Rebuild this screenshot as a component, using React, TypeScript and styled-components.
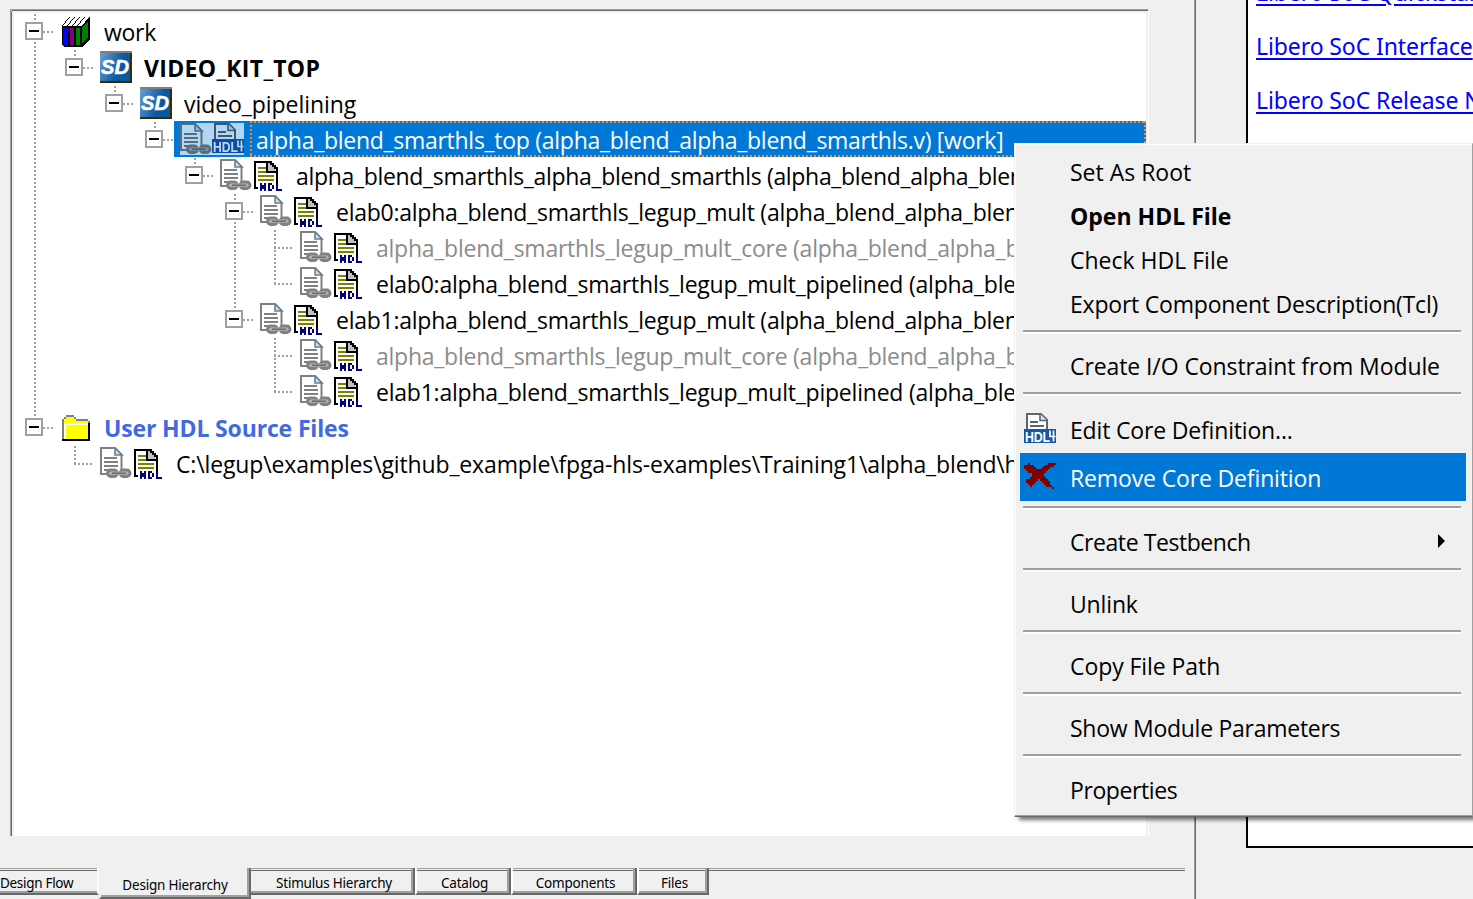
import React from 'react';
import styled, { createGlobalStyle, css } from 'styled-components';

const FACE = '#f0f0f0';
const SHADE = '#a0a0a0';
const DARK = '#696969';
const BLUE = '#0078d7';

const GlobalStyle = createGlobalStyle`
  *, *::before, *::after { box-sizing: border-box; }
  html, body { margin: 0; background: ${FACE}; overflow: hidden; }
  body { font-family: 'Open Sans', 'Noto Sans', sans-serif; color: #000; }
`;

const Screen = styled.div`
  position: relative;
  display: flex;
  width: 1473px;
  height: 899px;
  overflow: hidden;
  background: ${FACE};
`;

const LeftPane = styled.section`
  display: flex;
  flex-direction: column;
  flex: none;
  width: 1194px;
  padding-top: 9px;
`;

const Splitter = styled.div`
  flex: none;
  width: 2px;
  border-left: 1px solid ${SHADE};
  border-right: 1px solid ${DARK};
`;

const TreeFrame = styled.div`
  width: 1139px;
  height: 827px;
  margin-left: 10px;
  border-top: 1px solid ${SHADE};
  border-left: 1px solid ${SHADE};
  border-right: 1px solid #fff;
`;

const TreeView = styled.div`
  height: 825px;
  margin: 1px 0 0 1px;
  border: 2px solid ${FACE};
  border-bottom: 0;
  box-shadow: -1px 0 0 ${DARK}, 0 -1px 0 ${DARK};
  background: #fff;
  overflow: hidden;
`;

const Row = styled.div`
  display: flex;
  height: 36px;
  padding-left: 1px;
`;

const dotsDown = css`
  background-image: repeating-linear-gradient(to bottom, ${SHADE} 0 2px, transparent 2px 4px);
`;

const GuideCell = styled.div<{ $line: Guide }>`
  flex: none;
  display: flex;
  align-items: flex-start;
  width: 40px;
  height: 36px;
  background-repeat: no-repeat;
  background-position: 19px 1px;
  background-size: 2px ${(p) => (p.$line === 'full' ? 36 : 18)}px;
  ${(p) => p.$line !== 'none' && dotsDown}
`;

const Stub = styled.div<{ $leaf?: boolean }>`
  width: ${(p) => (p.$leaf ? 18 : 10)}px;
  height: 2px;
  margin: 18px 0 0 ${(p) => (p.$leaf ? 19 : 0)}px;
  background-image: repeating-linear-gradient(to right, ${SHADE} 0 2px, transparent 2px 4px);
`;

const ToggleBox = styled.div`
  display: flex;
  justify-content: center;
  width: 18px;
  height: 18px;
  margin: 9px 0 0 10px;
  padding-top: 6px;
  border: 2px solid ${SHADE};
  background: #fff;
`;

const Minus = styled.div`
  width: 10px;
  height: 2px;
  background: #000;
`;

const Content = styled.div<{ $selected?: boolean }>`
  display: flex;
  flex: 1;
  min-width: 0;
  margin-left: -1px;
  padding-left: 6px;
  background: ${(p) => (p.$selected ? BLUE : 'transparent')};
`;

const Icons = styled.div<{ $selected?: boolean }>`
  display: flex;
  flex: none;
  height: 32px;
  margin: 2px 6px 0 0;
  isolation: isolate;
  background: ${(p) => (p.$selected ? '#b2d7f5' : 'transparent')};
  svg {
    display: block;
    mix-blend-mode: ${(p) => (p.$selected ? 'multiply' : 'normal')};
  }
`;

const edgeH = 'repeating-linear-gradient(to right, #ff8728 0 2px, transparent 2px 4px)';
const edgeV = 'repeating-linear-gradient(to bottom, #ff8728 0 2px, transparent 2px 4px)';

const Label = styled.div<{ $selected?: boolean; $tone?: string; $bold?: boolean; $spacing?: number }>`
  flex: 1;
  min-width: 0;
  padding-left: 6px;
  font-size: 23px;
  line-height: 38px;
  white-space: pre;
  overflow: hidden;
  font-weight: ${(p) => (p.$bold ? 700 : 400)};
  letter-spacing: ${(p) => p.$spacing ?? 0}px;
  color: ${(p) => (p.$selected ? '#fff' : p.$tone ?? '#000')};
  ${(p) =>
    p.$selected &&
    css`
      background: ${edgeH} top / 100% 2px no-repeat, ${edgeH} bottom / 100% 2px no-repeat,
        ${edgeV} left / 2px 100% no-repeat, ${edgeV} right / 2px 100% no-repeat;
    `}
`;

const PALETTE: Record<string, string> = {
  K: '#000', Y: '#808000', g: '#c0c0c0', B: '#000080', y: '#ffff00', s: '#808080', R: '#800000', w: '#fff',
};

function Pixels({ map, left = 0, top = 0 }: { map: string[]; left?: number; top?: number }) {
  return (
    <svg width="32" height="32" shapeRendering="crispEdges">
      {map.flatMap((line, r) =>
        [...line].map((c, x) =>
          PALETTE[c] ? <rect key={`${r}-${x}`} x={left + x * 2} y={top + r * 2} width={2} height={2} fill={PALETTE[c]} /> : null,
        ),
      )}
    </svg>
  );
}

const HDL_MAP = [
  'KKKKKKKKK',
  'KwwwwwKgKK',
  'KwwwwwKggKK',
  'KwYYYYKgggKK',
  'KwwwwwKggggK',
  'KwYYYYKKKKKK',
  'KwwwwwwwwwwK',
  'KwYYYYYYYYwK',
  'KwwwwwwwwwwK',
  'KwYYYYYYYYwK',
  'KwwwwwwwwwwK',
  'Kw.B.B.BB..B',
  'Kw.BBB.B.B.B',
  'KK.BBB.B.B.B',
  '...B.B.BB..BBB',
];

const FOLDER_MAP = [
  '..ssss',
  '.syyyys',
  'syyyyyyssssss',
  'syyyyyyyyyyyys',
  'swwwwwwwwwwwwK',
  'swyyyyyyyyyyyK',
  'swyyyyyyyyyyyK',
  'swyyyyyyyyyyyK',
  'swyyyyyyyyyyyK',
  'swyyyyyyyyyyyK',
  'swyyyyyyyyyyyK',
  'swyyyyyyyyyyyK',
  'KKKKKKKKKKKKKK',
];

const CROSS_MAP = [
  '..R.........RRRR',
  'RRRRR.....RRRRR.',
  'RRRRRR...RRRR...',
  '.RRRRRRRRRRR....',
  '..RRRRRRRRR.....',
  '....RRRRRR......',
  '....RRRRRR......',
  '...RRRRRRRR.....',
  '.RRRRRR.RRRR....',
  '.RRRRR...RRRR...',
  '..RRR.....RRR...',
  '...R.......RRR..',
  '..............R.',
];

function BooksIcon() {
  return (
    <svg width="32" height="32" shapeRendering="crispEdges">
      <g transform="translate(2 2)">
        <path d="M0 9L7 0H28V22L20 30H2L0 28Z" fill="#000" />
        <path d="M1 9L8 0H12L5 9Z M6 9L13 0H17L10 9Z M11 9L18 0H22L15 9Z M16 9L23 0H27L20 9Z" fill="#fff" />
        <path d="M1 11H6V28H1Z" fill="#00f" />
        <path d="M8 11H12V28H8Z" fill="#800080" />
        <path d="M14 11H18V28H14Z M20 11L26 4V20L20 27Z" fill="#008000" />
      </g>
    </svg>
  );
}

function SmartDesignIcon() {
  return (
    <svg width="32" height="32">
      <defs>
        <linearGradient id="sd" x1="0" y1="0" x2="1" y2="0.35">
          <stop offset="0" stopColor="#6aa0d4" />
          <stop offset="0.75" stopColor="#0a57a4" />
        </linearGradient>
      </defs>
      <rect width="32" height="32" fill="#303000" />
      <rect width="32" height="2" fill="#808080" />
      <rect y="2" width="30" height="28" fill="url(#sd)" />
      <text x="1" y="22.500" fontFamily="Liberation Sans, sans-serif" fontSize="19.500" fontWeight="700" fontStyle="italic" fill="#fff" stroke="#fff" strokeWidth="0.500" textLength="28" lengthAdjust="spacingAndGlyphs">SD</text>
    </svg>
  );
}

function LinkedDocIcon() {
  return (
    <svg width="32" height="32">
      <path d="M1 1H15L21.500 8V27H1Z" fill="#fff" stroke="#808080" strokeWidth="2" />
      <path d="M15 1V8H22Z" fill="#cfe0ee" stroke="#6d8090" strokeWidth="1.6" />
      <path d="M4 11H17M4 15H18M4 19H18M4 23H9" stroke="#808080" strokeWidth="1.800" />
      <g fill="#b0b0b0" stroke="#808080" strokeWidth="2.800">
        <rect x="7.500" y="23" width="10" height="6.500" rx="3.200" />
        <rect x="20" y="23" width="10" height="6.500" rx="3.200" />
      </g>
      <path d="M12 26.200H26" stroke="#a8a8a8" strokeWidth="3.500" />
      <path d="M12 26.200H26" stroke="#606060" strokeWidth="1.200" />
    </svg>
  );
}

function CoreIcon() {
  return (
    <svg width="32" height="32">
      <path d="M3 17V1H17L23 7V17" fill="#fff" stroke="#5c6670" strokeWidth="2" />
      <path d="M16 1V7.500H23" fill="#d4e4f0" stroke="#5c6670" strokeWidth="1.6" />
      <path d="M6 9H14M6 13H20" stroke="#5c6670" strokeWidth="1.8" />
      <rect y="16" width="32" height="14" fill="#1757a6" />
      <text x="1" y="28.500" fontFamily="Liberation Sans, sans-serif" fontSize="15" fontWeight="700" fill="#fff" textLength="25" lengthAdjust="spacingAndGlyphs">HDL</text>
      <path d="M26 17.500V23.500H31.500M29.500 17.500V28.500" stroke="#fff" strokeWidth="1.7" fill="none" />
    </svg>
  );
}

type Guide = 'none' | 'full' | 'upper';
type IconKind = 'books' | 'sd' | 'folder' | 'hdl' | 'core';
interface Node {
  guides: Guide[];
  leaf?: boolean;
  icon: IconKind;
  text: string;
  tone?: string;
  bold?: boolean;
  selected?: boolean;
  spacing?: number;
}

const F: Guide = 'full';
const N: Guide = 'none';
const U: Guide = 'upper';
const FILE = '(alpha_blend_alpha_blend_smarthls.v)';

const NODES: Node[] = [
  { guides: [F], icon: 'books', text: 'work', spacing: -0.3 },
  { guides: [F, U], icon: 'sd', text: 'VIDEO_KIT_TOP', bold: true, spacing: 0.33 },
  { guides: [F, N, U], icon: 'sd', text: 'video_pipelining', spacing: -0.06 },
  { guides: [F, N, N, U], icon: 'core', text: `alpha_blend_smarthls_top ${FILE} [work]`, selected: true, spacing: -0.28 },
  { guides: [F, N, N, N, U], icon: 'hdl', text: `alpha_blend_smarthls_alpha_blend_smarthls ${FILE}`, spacing: -0.32 },
  { guides: [F, N, N, N, N, F], icon: 'hdl', text: `elab0:alpha_blend_smarthls_legup_mult ${FILE}`, spacing: -0.25 },
  { guides: [F, N, N, N, N, F, F], leaf: true, icon: 'hdl', text: `alpha_blend_smarthls_legup_mult_core ${FILE}`, tone: '#8c8c8c', spacing: -0.25 },
  { guides: [F, N, N, N, N, F, U], leaf: true, icon: 'hdl', text: `elab0:alpha_blend_smarthls_legup_mult_pipelined ${FILE}`, spacing: -0.22 },
  { guides: [F, N, N, N, N, U], icon: 'hdl', text: `elab1:alpha_blend_smarthls_legup_mult ${FILE}`, spacing: -0.25 },
  { guides: [F, N, N, N, N, N, F], leaf: true, icon: 'hdl', text: `alpha_blend_smarthls_legup_mult_core ${FILE}`, tone: '#8c8c8c', spacing: -0.25 },
  { guides: [F, N, N, N, N, N, U], leaf: true, icon: 'hdl', text: `elab1:alpha_blend_smarthls_legup_mult_pipelined ${FILE}`, spacing: -0.22 },
  { guides: [U], icon: 'folder', text: 'User HDL Source Files', tone: '#4169e1', bold: true, spacing: -0.15 },
  { guides: [N, U], leaf: true, icon: 'hdl', text: 'C:\\legup\\examples\\github_example\\fpga-hls-examples\\Training1\\alpha_blend\\hls_output', spacing: -0.14 },
];

function NodeIcons({ kind }: { kind: IconKind }) {
  if (kind === 'books') return <BooksIcon />;
  if (kind === 'sd') return <SmartDesignIcon />;
  if (kind === 'folder') return <Pixels map={FOLDER_MAP} left={2} top={4} />;
  return (
    <>
      <LinkedDocIcon />
      {kind === 'core' ? <CoreIcon /> : <Pixels map={HDL_MAP} left={2} top={2} />}
    </>
  );
}

function TreeRow({ node }: { node: Node }) {
  const last = node.guides.length - 1;
  return (
    <Row>
      {node.guides.map((line, i) => (
        <GuideCell key={i} $line={line}>
          {i === last && node.leaf && <Stub $leaf />}
          {i === last && !node.leaf && (
            <>
              <ToggleBox><Minus /></ToggleBox>
              <Stub />
            </>
          )}
        </GuideCell>
      ))}
      <Content $selected={node.selected}>
        <Icons $selected={node.selected}><NodeIcons kind={node.icon} /></Icons>
        <Label $selected={node.selected} $tone={node.tone} $bold={node.bold} $spacing={node.spacing}>{node.text}</Label>
      </Content>
    </Row>
  );
}

const TabBar = styled.nav`
  display: flex;
  width: 1185px;
  height: 31px;
  margin-top: 32px;
  font-family: 'Noto Sans', sans-serif;
  font-size: 13.5px;
  letter-spacing: -0.2px;
`;

const topEdge = `inset 0 1px 0 ${SHADE}, inset 0 2px 0 ${FACE}, inset 0 3px 0 ${DARK}`;

const Tab = styled.div<{ $width: number }>`
  flex: none;
  display: flex;
  justify-content: center;
  align-items: center;
  width: ${(p) => p.$width}px;
  height: 27px;
  padding: 4px 0 0 3px;
  white-space: pre;
  border-left: 2px solid #fff;
  border-bottom: 2px solid ${DARK};
  border-right: 2px solid ${DARK};
  box-shadow: inset 0 -2px 0 ${SHADE}, inset -2px 0 0 ${SHADE}, ${topEdge};
`;

const LeadTab = styled(Tab)`
  justify-content: flex-start;
  padding-left: 0;
  letter-spacing: -0.3px;
  border-left: 0;
  border-right-color: #fff;
  box-shadow: inset 0 -2px 0 ${SHADE}, ${topEdge};
`;

const ActiveTab = styled(Tab)`
  height: 31px;
  padding-left: 0;
  border-left-color: ${FACE};
  box-shadow: inset 0 -2px 0 ${SHADE}, inset -2px 0 0 ${SHADE};
`;

const NextTab = styled(Tab)`
  border-left: 0;
  padding-left: 4px;
`;

const TabFill = styled.div`
  flex: 1;
  height: 3px;
  border-top: 1px solid ${SHADE};
  border-bottom: 1px solid ${DARK};
`;

const RightPane = styled.section`
  flex: 1;
  min-width: 0;
  padding-left: 50px;
`;

const Browser = styled.div`
  height: 848px;
  border-left: 2px solid #000;
  border-bottom: 2px solid #000;
  background: #fff;
  padding-left: 8px;
  overflow: hidden;
`;

const LinkList = styled.div`
  display: flex;
  flex-direction: column;
  align-items: flex-start;
  margin-top: -35px;
`;

const Link = styled.a`
  height: 54px;
  line-height: 54px;
  font-family: 'Noto Sans', sans-serif;
  font-size: 23px;
  letter-spacing: -0.1px;
  color: #00f;
  white-space: pre;
  text-decoration: underline;
  text-decoration-thickness: 2px;
  text-underline-offset: 3px;
`;

const Menu = styled.div`
  position: absolute;
  left: 1014px;
  top: 143px;
  width: 459px;
  height: 674px;
  padding: 5px 6px 3px 5px;
  background: ${FACE};
  border-left: 1px solid ${FACE};
  border-top: 1px solid ${FACE};
  border-right: 1px solid ${SHADE};
  border-bottom: 1px solid ${DARK};
  box-shadow: inset 0 -1px 0 ${SHADE}, inset 1px 1px 0 #fff, 4px 4px 4px -1px rgba(0, 0, 0, 0.55);
`;

const Item = styled.div<{ $tall?: boolean; $active?: boolean; $bold?: boolean; $spacing?: number }>`
  display: flex;
  align-items: center;
  height: ${(p) => (p.$tall ? 48 : 44)}px;
  padding: 0 20px 0 4px;
  font-size: 23px;
  font-weight: ${(p) => (p.$bold ? 700 : 400)};
  letter-spacing: ${(p) => p.$spacing ?? 0}px;
  color: ${(p) => (p.$active ? '#fff' : '#000')};
  background: ${(p) => (p.$active ? BLUE : 'transparent')};
`;

const ItemIcon = styled.span`
  flex: none;
  width: 46px;
  height: 36px;
  padding-top: 2px;
  svg { display: block; }
`;

const ItemText = styled.span`
  flex: 1;
  padding-top: 2px;
  white-space: pre;
`;

const Divider = styled.div`
  height: 18px;
  padding: 5px 5px 0 3px;
  &::before {
    content: '';
    display: block;
    height: 4px;
    border-top: 2px solid ${SHADE};
    border-bottom: 2px solid #fff;
  }
`;

const Arrow = () => (
  <svg width="8" height="14"><path d="M0 0L7 7L0 14Z" fill="#000" /></svg>
);

interface MenuEntry {
  text: string;
  bold?: boolean;
  tall?: boolean;
  active?: boolean;
  icon?: React.ReactNode;
  sub?: boolean;
  spacing?: number;
}

const MENU: (MenuEntry | null)[] = [
  { text: 'Set As Root' },
  { text: 'Open HDL File', bold: true },
  { text: 'Check HDL File' },
  { text: 'Export Component Description(Tcl)', spacing: -0.21 },
  null,
  { text: 'Create I/O Constraint from Module', spacing: -0.09 },
  null,
  { text: 'Edit Core Definition...', tall: true, icon: <CoreIcon />, spacing: -0.17 },
  { text: 'Remove Core Definition', tall: true, active: true, icon: <Pixels map={CROSS_MAP} top={2} />, spacing: -0.14 },
  null,
  { text: 'Create Testbench', sub: true, spacing: -0.43 },
  null,
  { text: 'Unlink', spacing: -0.15 },
  null,
  { text: 'Copy File Path', spacing: -0.07 },
  null,
  { text: 'Show Module Parameters', spacing: -0.27 },
  null,
  { text: 'Properties', spacing: -0.4 },
];

export default function App() {
  return (
    <Screen>
      <GlobalStyle />
      <LeftPane>
        <TreeFrame>
          <TreeView>
            {NODES.map((n, i) => <TreeRow key={i} node={n} />)}
          </TreeView>
        </TreeFrame>
        <TabBar>
          <LeadTab $width={99}>Design Flow</LeadTab>
          <ActiveTab $width={152}>Design Hierarchy</ActiveTab>
          <NextTab $width={164}>Stimulus Hierarchy</NextTab>
          <Tab $width={96}>Catalog</Tab>
          <Tab $width={126}>Components</Tab>
          <Tab $width={72}>Files</Tab>
          <TabFill />
        </TabBar>
      </LeftPane>
      <Splitter />
      <RightPane>
        <Browser>
          <LinkList>
            <Link>Libero SoC Quickstart</Link>
            <Link>Libero SoC Interface</Link>
            <Link>Libero SoC Release Notes</Link>
          </LinkList>
        </Browser>
      </RightPane>
      <Menu>
        {MENU.map((m, i) =>
          m ? (
            <Item key={i} $tall={m.tall} $active={m.active} $bold={m.bold} $spacing={m.spacing}>
              <ItemIcon>{m.icon}</ItemIcon>
              <ItemText>{m.text}</ItemText>
              {m.sub && <Arrow />}
            </Item>
          ) : (
            <Divider key={i} />
          ),
        )}
      </Menu>
    </Screen>
  );
}
